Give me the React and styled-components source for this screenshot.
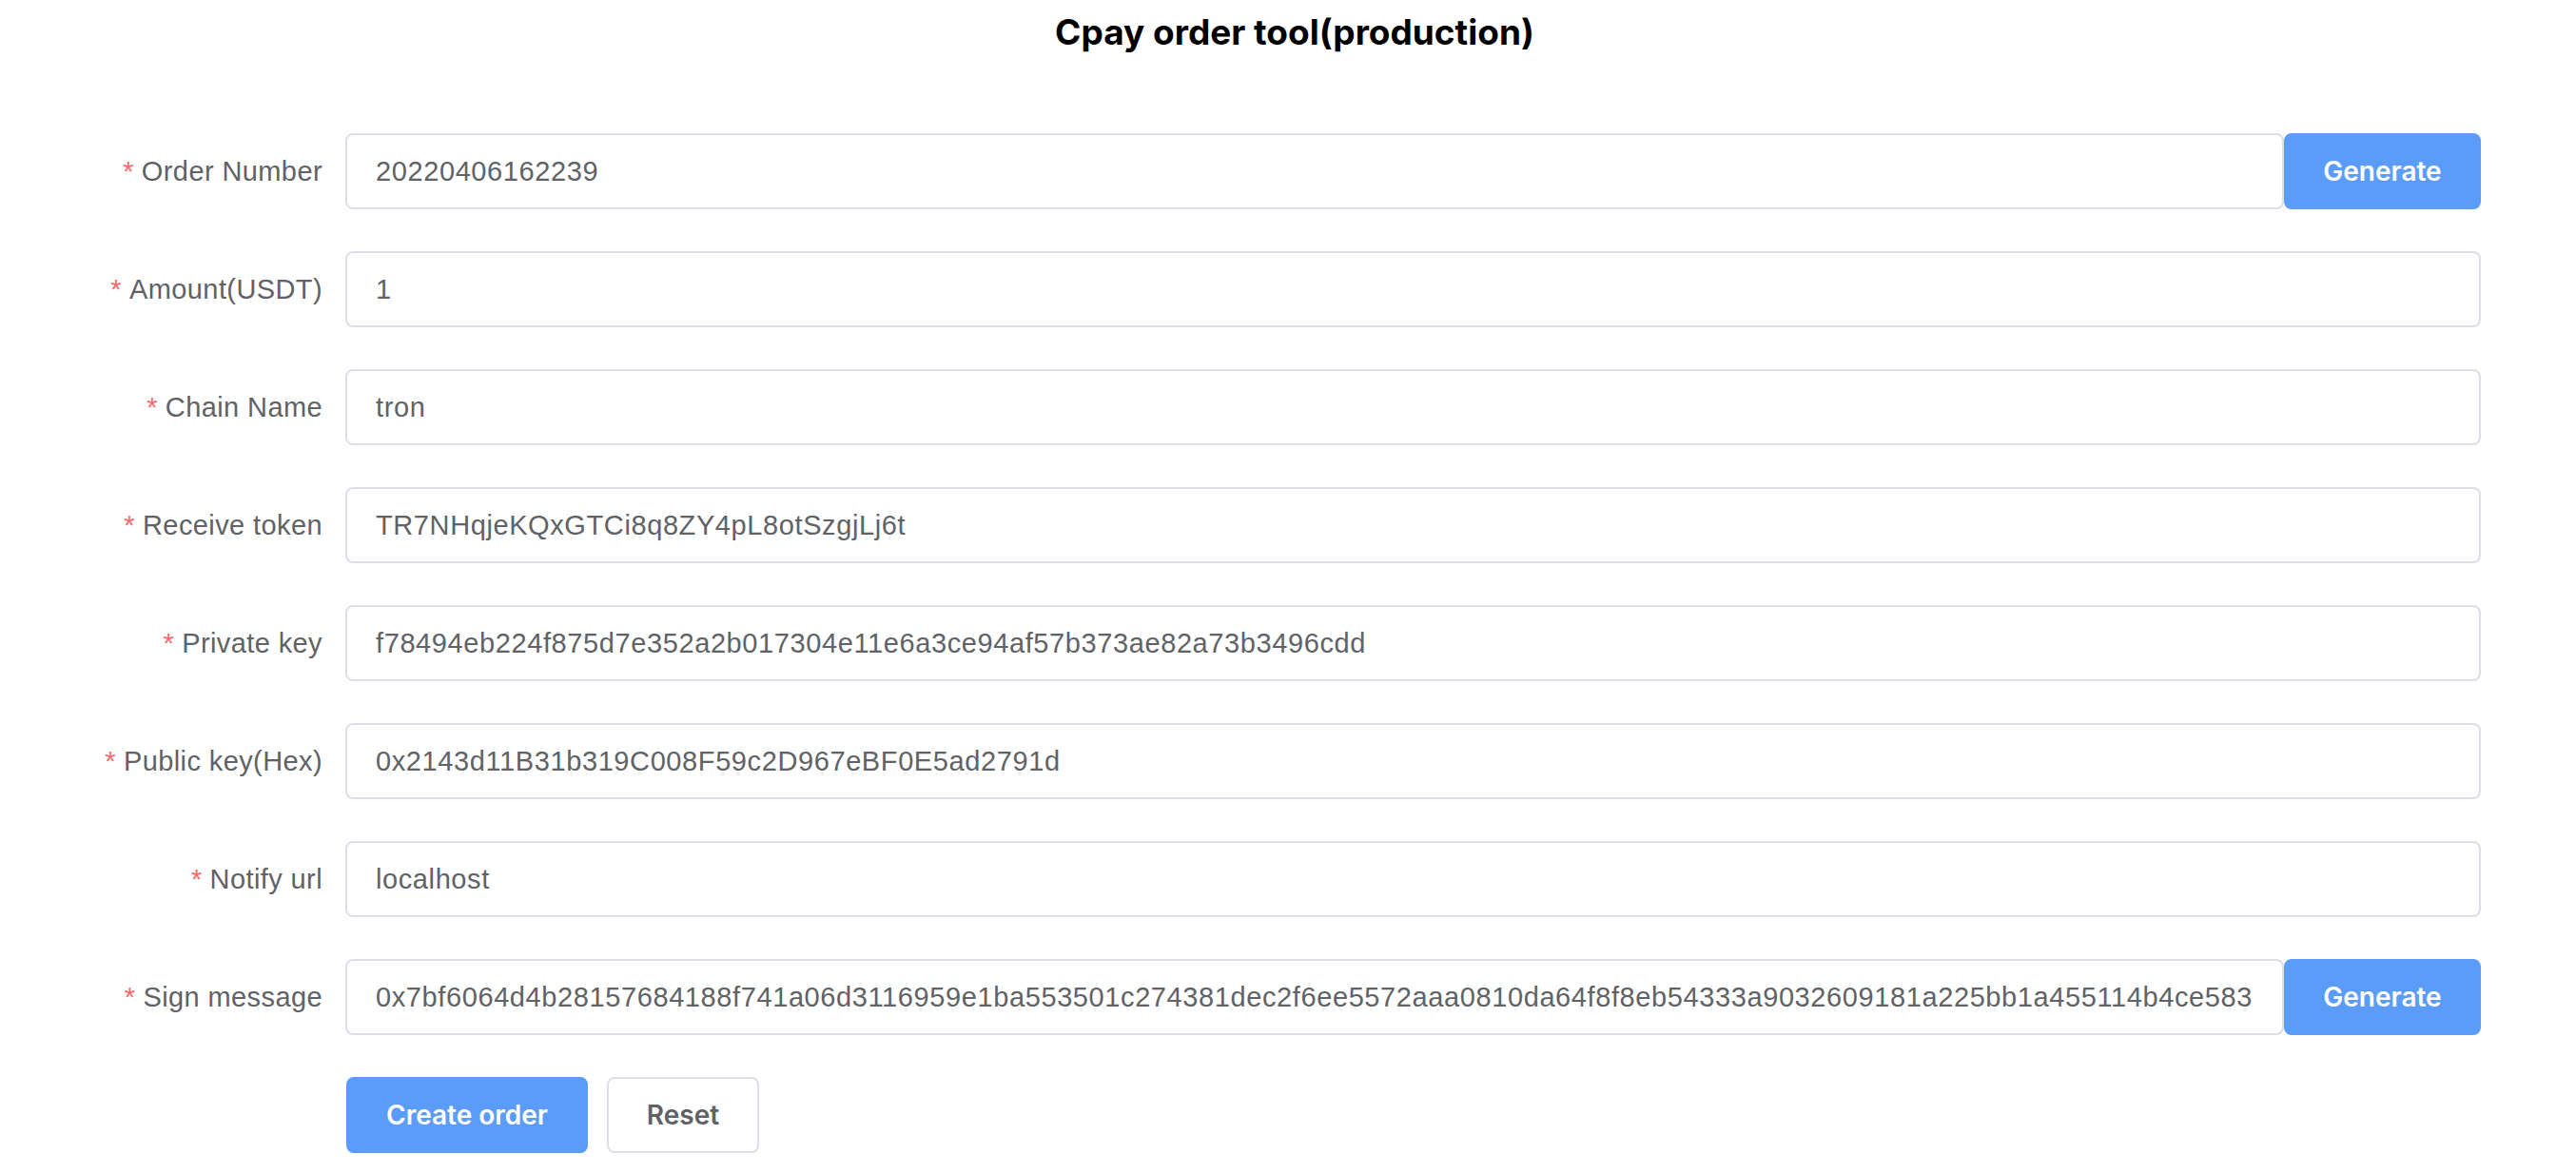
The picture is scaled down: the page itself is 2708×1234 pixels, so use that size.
import React from 'react';
import styled, { createGlobalStyle } from 'styled-components';

const GlobalStyle = createGlobalStyle`
  body {
    margin: 0;
    background: #fff;
    font-family: "Liberation Sans", Arial, sans-serif;
  }
`;

const Page = styled.div`
  padding: 12px 100px 0 0;
`;

const Title = styled.h3`
  margin: 0 0 84px 114px;
  font-family: Inter, "Liberation Sans", sans-serif;
  font-size: 37px;
  font-weight: 700;
  line-height: 44px;
  text-align: center;
  color: #000;
`;

const Form = styled.form`
  display: flex;
  flex-direction: column;
  gap: 44px;
`;

const Row = styled.div`
  display: flex;
  align-items: center;
  height: 80px;
`;

const Label = styled.label`
  flex: 0 0 363px;
  box-sizing: border-box;
  padding-right: 24px;
  text-align: right;
  font-size: 29px;
  letter-spacing: 0.4px;
  color: #606266;
  line-height: 80px;

  &::before {
    content: '*';
    color: #f56c6c;
    margin-right: 8px;
  }
`;

const Field = styled.div`
  flex: 1;
  display: flex;
  height: 80px;
`;

const Input = styled.input`
  flex: 1;
  min-width: 0;
  box-sizing: border-box;
  height: 80px;
  padding: 0 30px;
  border: 2px solid #dcdfe6;
  border-radius: 8px;
  font-family: "Liberation Sans", Arial, sans-serif;
  font-size: 29px;
  letter-spacing: 0.6px;
  color: #606266;
  background: #fff;
  outline: none;
`;

const Button = styled.button`
  box-sizing: border-box;
  height: 80px;
  width: ${({ $width }) => $width}px;
  padding: 0;
  border: 2px solid ${({ $primary }) => ($primary ? '#5b9cf8' : '#dcdfe6')};
  border-radius: 8px;
  background: ${({ $primary }) => ($primary ? '#5b9cf8' : '#fff')};
  color: ${({ $primary }) => ($primary ? '#fff' : '#606266')};
  font-family: Inter, "Liberation Sans", sans-serif;
  font-size: 28px;
  font-weight: 600;
  cursor: pointer;
`;

const Actions = styled.div`
  display: flex;
  gap: 20px;
  margin-left: 364px;
  height: 80px;
`;

const fields = [
  { label: 'Order Number', value: '20220406162239', generate: true },
  { label: 'Amount(USDT)', value: '1' },
  { label: 'Chain Name', value: 'tron' },
  { label: 'Receive token', value: 'TR7NHqjeKQxGTCi8q8ZY4pL8otSzgjLj6t' },
  { label: 'Private key', value: 'f78494eb224f875d7e352a2b017304e11e6a3ce94af57b373ae82a73b3496cdd' },
  { label: 'Public key(Hex)', value: '0x2143d11B31b319C008F59c2D967eBF0E5ad2791d' },
  { label: 'Notify url', value: 'localhost' },
  {
    label: 'Sign message',
    value: '0x7bf6064d4b28157684188f741a06d3116959e1ba553501c274381dec2f6ee5572aaa0810da64f8f8eb54333a9032609181a225bb1a455114b4ce583',
    generate: true,
  },
];

const App = () => {
  return (
    <Page>
      <GlobalStyle />
      <Title>Cpay order tool(production)</Title>
      <Form onSubmit={(e) => e.preventDefault()}>
        {fields.map((f) => (
          <Row key={f.label}>
            <Label>{f.label}</Label>
            <Field>
              <Input defaultValue={f.value} />
              {f.generate && (
                <Button type="button" $primary $width={207}>
                  Generate
                </Button>
              )}
            </Field>
          </Row>
        ))}
        <Actions>
          <Button type="submit" $primary $width={254}>
            Create order
          </Button>
          <Button type="reset" $width={160}>
            Reset
          </Button>
        </Actions>
      </Form>
    </Page>
  );
};

export default App;
